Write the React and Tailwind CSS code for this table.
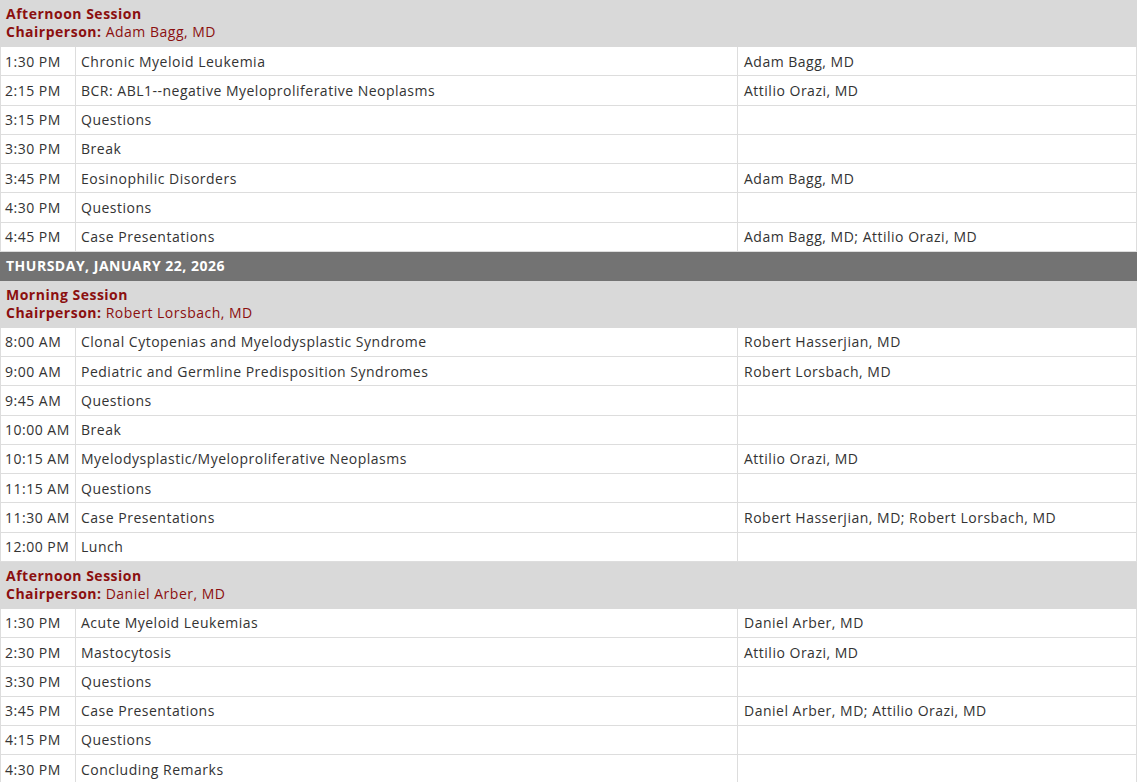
import React from "react";

const schedule = [
  {
    type: "session",
    title: "Afternoon Session",
    chair: "Adam Bagg, MD",
    rows: [
      ["1:30 PM", "Chronic Myeloid Leukemia", "Adam Bagg, MD"],
      ["2:15 PM", "BCR: ABL1--negative Myeloproliferative Neoplasms", "Attilio Orazi, MD"],
      ["3:15 PM", "Questions", ""],
      ["3:30 PM", "Break", ""],
      ["3:45 PM", "Eosinophilic Disorders", "Adam Bagg, MD"],
      ["4:30 PM", "Questions", ""],
      ["4:45 PM", "Case Presentations", "Adam Bagg, MD; Attilio Orazi, MD"],
    ],
  },
  { type: "day", title: "THURSDAY, JANUARY 22, 2026" },
  {
    type: "session",
    title: "Morning Session",
    chair: "Robert Lorsbach, MD",
    rows: [
      ["8:00 AM", "Clonal Cytopenias and Myelodysplastic Syndrome", "Robert Hasserjian, MD"],
      ["9:00 AM", "Pediatric and Germline Predisposition Syndromes", "Robert Lorsbach, MD"],
      ["9:45 AM", "Questions", ""],
      ["10:00 AM", "Break", ""],
      ["10:15 AM", "Myelodysplastic/Myeloproliferative Neoplasms", "Attilio Orazi, MD"],
      ["11:15 AM", "Questions", ""],
      ["11:30 AM", "Case Presentations", "Robert Hasserjian, MD; Robert Lorsbach, MD"],
      ["12:00 PM", "Lunch", ""],
    ],
  },
  {
    type: "session",
    title: "Afternoon Session",
    chair: "Daniel Arber, MD",
    rows: [
      ["1:30 PM", "Acute Myeloid Leukemias", "Daniel Arber, MD"],
      ["2:30 PM", "Mastocytosis", "Attilio Orazi, MD"],
      ["3:30 PM", "Questions", ""],
      ["3:45 PM", "Case Presentations", "Daniel Arber, MD; Attilio Orazi, MD"],
      ["4:15 PM", "Questions", ""],
      ["4:30 PM", "Concluding Remarks", ""],
    ],
  },
];

const cell = "border border-[#dddddd] align-middle";

export default function App() {
  return (
    <div className="bg-white w-[1138px] h-[782px] overflow-hidden font-['Open_Sans',sans-serif] text-[14px] tracking-[0.5px] text-[#333333]">
      <table className="-mt-px w-[1137px] border-collapse table-fixed">
        <colgroup>
          <col className="w-[75px]" />
          <col className="w-[662px]" />
          <col />
        </colgroup>
        <tbody>
          {schedule.map((block, i) =>
            block.type === "day" ? (
              <tr key={i} className="h-[29px]">
                <td colSpan={3} className="bg-[#737373] text-white font-bold px-[5px] border border-[#737373]">
                  {block.title}
                </td>
              </tr>
            ) : (
              <React.Fragment key={i}>
                <tr className="h-[47px]">
                  <td colSpan={3} className="bg-[#d9d9d9] border border-[#d9d9d9] px-[5px] text-[#8b0f0f] leading-[18px]">
                    <div className="font-bold">{block.title}</div>
                    <div>
                      <span className="font-bold">Chairperson:</span> {block.chair}
                    </div>
                  </td>
                </tr>
                {block.rows.map(([time, topic, speaker], j) => (
                  <tr key={j} className="h-[29.25px]">
                    <td className={`${cell} pl-[4px] whitespace-nowrap`}>{time}</td>
                    <td className={`${cell} pl-[5px]`}>{topic}</td>
                    <td className={`${cell} pl-[6px]`}>{speaker}</td>
                  </tr>
                ))}
              </React.Fragment>
            )
          )}
        </tbody>
      </table>
    </div>
  );
}
